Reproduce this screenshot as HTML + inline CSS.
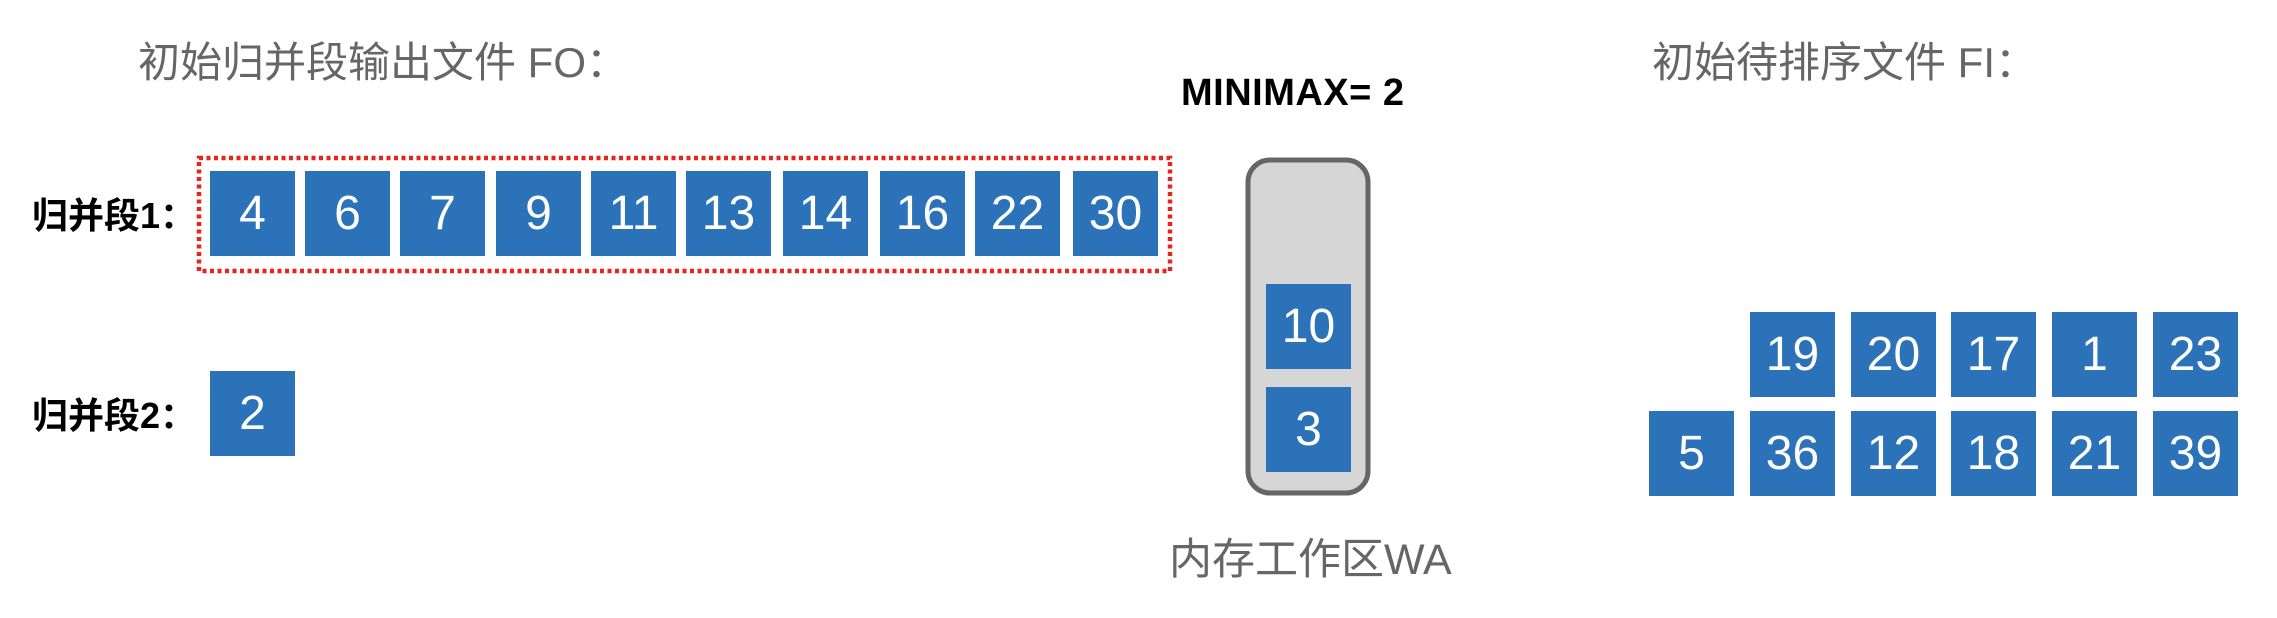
<!DOCTYPE html>
<html><head><meta charset="utf-8"><style>
body{margin:0;width:2277px;height:618px;background:#fff;position:relative;overflow:hidden;font-family:"Liberation Sans","Noto Sans CJK SC",sans-serif}
.t{position:absolute;white-space:nowrap;line-height:1}
.b{position:absolute;width:85px;height:85px;background:#2c72b8;color:#fff;font-size:48px;display:flex;align-items:center;justify-content:center;font-family:"Liberation Sans",sans-serif}
.lbl{font-weight:bold;font-size:36px;color:#000}
.gr{color:#666;font-size:42px}
</style></head><body>
<div class="t gr" style="left:138px;top:42px">初始归并段输出文件 FO：</div>
<div class="t gr" style="left:1652px;top:42px">初始待排序文件 FI：</div>
<div class="t" style="left:1181px;top:74px;font-weight:bold;font-size:38px;letter-spacing:0.5px">MINIMAX= 2</div>
<div class="t lbl" style="left:32px;top:198px">归并段1：</div>
<div class="t lbl" style="left:32px;top:398px">归并段2：</div>
<svg style="position:absolute;left:0;top:0" width="2277" height="618">
<rect x="199" y="158" width="971" height="113" fill="none" stroke="#e8231f" stroke-width="4.5" stroke-dasharray="4 3.5"/>
<rect x="1248" y="160" width="120" height="333" rx="22" fill="#d6d6d6" stroke="#666" stroke-width="5"/>
</svg>
<div class="b" style="left:210px;top:171px">4</div>
<div class="b" style="left:305px;top:171px">6</div>
<div class="b" style="left:400px;top:171px">7</div>
<div class="b" style="left:496px;top:171px">9</div>
<div class="b" style="left:591px;top:171px">11</div>
<div class="b" style="left:686px;top:171px">13</div>
<div class="b" style="left:783px;top:171px">14</div>
<div class="b" style="left:880px;top:171px">16</div>
<div class="b" style="left:975px;top:171px">22</div>
<div class="b" style="left:1073px;top:171px">30</div>
<div class="b" style="left:210px;top:371px">2</div>
<div class="b" style="left:1266px;top:284px">10</div>
<div class="b" style="left:1266px;top:387px">3</div>
<div class="t gr" style="left:1169px;top:539px;font-size:43px">内存工作区WA</div>
<div class="b" style="left:1750px;top:312px">19</div>
<div class="b" style="left:1851px;top:312px">20</div>
<div class="b" style="left:1951px;top:312px">17</div>
<div class="b" style="left:2052px;top:312px">1</div>
<div class="b" style="left:2153px;top:312px">23</div>
<div class="b" style="left:1649px;top:411px">5</div>
<div class="b" style="left:1750px;top:411px">36</div>
<div class="b" style="left:1851px;top:411px">12</div>
<div class="b" style="left:1951px;top:411px">18</div>
<div class="b" style="left:2052px;top:411px">21</div>
<div class="b" style="left:2153px;top:411px">39</div>
</body></html>
